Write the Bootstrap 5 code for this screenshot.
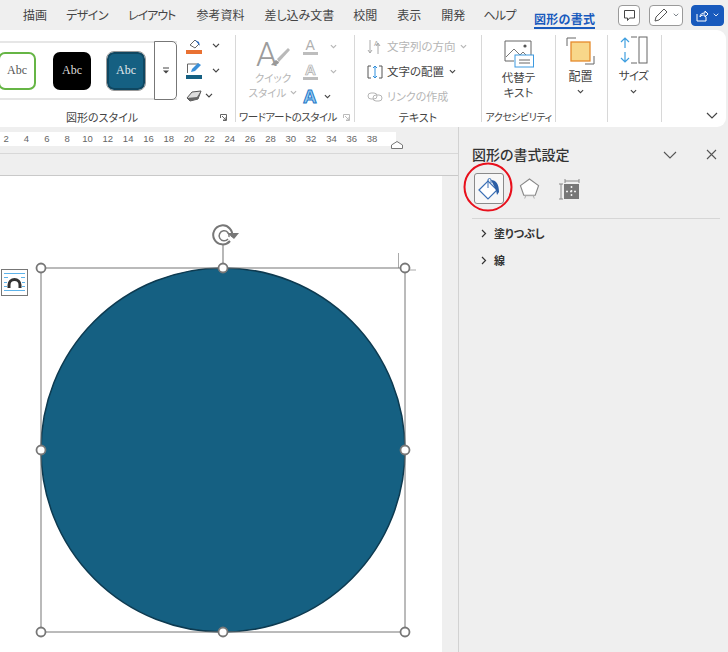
<!DOCTYPE html>
<html lang="ja">
<head>
<meta charset="utf-8">
<title>図形の書式設定</title>
<link href="https://cdn.jsdelivr.net/npm/bootstrap@5.3.0/dist/css/bootstrap.min.css" rel="stylesheet">
<style>
html,body{height:652px;overflow:hidden}
body{background:#efefef;color:#444;font-family:"Noto Sans CJK JP","Liberation Sans",sans-serif;font-size:12px;font-feature-settings:"palt";line-height:1.2}
svg{display:block;flex:none;overflow:visible}
.tabs{height:30px;padding-left:23px}
.tab{margin-right:20px;white-space:nowrap}
.tab-1{margin-right:19px}
.tab-8{margin-right:18px}
.tab-2{letter-spacing:-.5px}
.tab-3{letter-spacing:-1px;margin-right:21px}
.tab-5{margin-right:19px}
.tab-9{letter-spacing:-.6px;margin-right:18px}
.tab-active{color:#185abd;font-weight:700;border-bottom:2px solid #185abd;line-height:17px;margin-top:8px;height:19px;letter-spacing:.3px;margin-right:23px}
.qbtn{height:21px;border:1px solid #9a9a9a;border-radius:4px;background:#fff}
.qbtn-blue{background:#185abd;border-color:#185abd;color:#fff}
.ribbon{height:97px;width:726px;background:#fff;border-radius:0 9px 9px 0}
.grp{height:87px;margin-top:5px;border-right:1px solid #d8d8d8;flex:none;position:relative}
.g1{width:236px}.g2{width:119px}.g3{width:127px}.g4{width:74px}.g5{width:52px}.g6{width:54px}
.cap{font-size:11px;color:#444;height:14px;line-height:14px;white-space:nowrap;margin-top:auto;margin-bottom:-2px}
.cap-wa{font-size:10.5px;letter-spacing:-.5px;margin-left:3px}
.cap-ac{font-size:10px;letter-spacing:-.5px}
.gal{width:177px;height:59px;margin-top:6px;border-top:2px solid #e6e6e6;border-bottom:2px solid #e6e6e6;position:relative}
.tile{width:38px;height:38px;border-radius:7px;font:12px "Liberation Serif",serif;flex:none}
.t-w{background:#fff;border:2px solid #66b545;color:#555;margin-left:-2px}
.t-b{background:#000;color:#ddd;margin-left:17px}
.t-c{background:#156082;color:#e2e8ec;border:2px solid #0f4761;outline:1px solid #999;margin-left:16px}
.galbtn{width:23px;height:59px;margin-top:-2px;margin-bottom:-2px;margin-left:auto;border:1px solid #777;border-radius:0 5px 5px 0;background:#fff}
.gcol{margin-left:9px;margin-top:-2px}
.rowi{height:25px}
.dim{color:#b5b5b5}
.lab{font-size:11.5px;white-space:nowrap}
.quick{width:62px;margin-left:6px;margin-top:4px;font-size:10.5px;line-height:15px}
.main{height:525px}
.left{width:459px;border-right:1px solid #d2d2d2}
.rulerwrap{height:27px;padding-top:5px;border-bottom:1px solid #d8d8d8;position:relative}
.ruler{width:396px;height:14px;background:#fff;overflow:hidden}
.ruler span{flex:none;width:20.33px;text-align:center;font:9.5px/14px "Liberation Sans",sans-serif;color:#666}
.ruler span:first-child{margin-left:-4px}
.marker{position:absolute;left:391px;top:14px}
.band{height:22px;border-bottom:1px solid #c9c9c9}
.doc{width:442px;height:476px;background:#fff}
.pane{width:269px;padding:19px 8px 0 13px;position:relative}
.ptitle{font-size:14px;font-weight:500;color:#333;line-height:17px}
.picon{height:31px;margin-top:10px}
.pact{width:30px;height:31px;margin-left:2px;border:1px solid #8a8a8a;border-radius:3px;background:#f7f7f7}
.prule{border-top:1px solid #d6d6d6;margin-top:14px;position:relative}
.pitem{font-size:11px;font-weight:700;color:#333;height:27px;margin-left:9px}
.ring{position:absolute;left:4px;top:35px}
</style>
</head>
<body>
<svg class="d-none" width="0" height="0"><symbol id="chev" viewBox="0 0 8 5"><path d="M1 .8l3 3 3-3" fill="none" stroke="currentColor" stroke-width="1.2"/></symbol></svg>

<div class="tabs d-flex align-items-center">
  <div class="tab tab-1">描画</div><div class="tab tab-2">デザイン</div><div class="tab tab-3">レイアウト</div><div class="tab">参考資料</div><div class="tab tab-5">差し込み文書</div><div class="tab">校閲</div><div class="tab">表示</div><div class="tab tab-8">開発</div><div class="tab tab-9">ヘルプ</div><div class="tab tab-active">図形の書式</div>
  <div class="qbtn d-flex align-items-center justify-content-center" style="width:22px">
    <svg width="13" height="13" viewBox="0 0 13 13"><path d="M1.5 1.5h10v7.5h-5l-2 2.5v-2.5h-3z" fill="none" stroke="#444"/></svg>
  </div>
  <div class="qbtn d-flex align-items-center justify-content-center gap-1" style="width:34px;margin-left:9px">
    <svg width="16" height="16" viewBox="0 0 16 16"><path d="M2 14l1-4 8-8 3 3-8 8z" fill="none" stroke="#555"/></svg>
    <svg width="6" height="4" class="text-secondary"><use href="#chev"/></svg>
  </div>
  <div class="qbtn qbtn-blue d-flex align-items-center justify-content-center gap-1" style="width:33px;margin-left:8px">
    <svg width="13" height="13" viewBox="0 0 13 13"><path d="M1 5v7h9V8M4 8c0-3 2-4 5-4V2l3 3-3 3V6C7 6 5 6 4 8z" fill="none" stroke="#fff"/></svg>
    <svg width="6" height="4"><use href="#chev"/></svg>
  </div>
</div>

<div class="ribbon d-flex">
  <div class="grp g1 d-flex flex-column">
    <div class="d-flex">
      <div class="gal d-flex align-items-center">
        <div class="tile t-w d-flex align-items-center justify-content-center">Abc</div>
        <div class="tile t-b d-flex align-items-center justify-content-center">Abc</div>
        <div class="tile t-c d-flex align-items-center justify-content-center">Abc</div>
        <div class="galbtn d-flex align-items-center justify-content-center">
          <svg width="8" height="7" viewBox="0 0 8 7"><path d="M1 1h6" stroke="#444"/><path d="M1 3.500l3 3 3-3z" fill="#444"/></svg>
        </div>
      </div>
      <div class="gcol">
        <div class="rowi d-flex align-items-center">
          <svg width="17" height="17" viewBox="0 0 17 17"><path d="M4 8l5-5 4 4-4 4z" fill="none" stroke="#666"/><path d="M9 3l4 2 1 4z" fill="#2f6fc4"/><rect x="0" y="13" width="16" height="4" fill="#e97132"/></svg>
          <svg width="8" height="5" style="margin-left:9px"><use href="#chev"/></svg>
        </div>
        <div class="rowi d-flex align-items-center">
          <svg width="17" height="17" viewBox="0 0 17 17"><path d="M1.500 11V2h11" fill="none" stroke="#666"/><path d="M5 10l1-3 6-6 3 2-6 6z" fill="#3a8fd8"/><rect x="0" y="13" width="16" height="4" fill="#156082"/></svg>
          <svg width="8" height="5" style="margin-left:9px"><use href="#chev"/></svg>
        </div>
        <div class="rowi d-flex align-items-center">
          <svg width="17" height="14" viewBox="0 0 17 14"><path d="M1 9l5-6 9-1-3 8-8 2z" fill="#ddd" stroke="#555"/><path d="M1 9l10-1 4-6-3 8-8 2z" fill="#666"/></svg>
          <svg width="8" height="5" style="margin-left:2px"><use href="#chev"/></svg>
        </div>
      </div>
    </div>
    <div class="cap d-flex">
      <span style="margin-left:66px">図形のスタイル</span>
      <svg class="ms-auto me-2 mt-1" width="7" height="7" viewBox="0 0 7 7"><path d="M.5 4V.5H6.500V6.500H3M2 2l4 4M6 3v3H3" fill="none" stroke="#666"/></svg>
    </div>
  </div>

  <div class="grp g2 d-flex flex-column">
    <div class="d-flex">
      <div class="quick text-center dim">
        <svg class="mx-auto" width="36" height="31" viewBox="0 0 36 31"><text x="1" y="27" font-family="Roboto,'Liberation Sans',sans-serif" font-weight="300" font-size="34" fill="#9c9c9c">A</text><path d="M33 9L22 20l2 3 11-12z" fill="#b9b9b9"/><path d="M21 21c-2 1-3 3-5 5 4 1 8-1 8-3z" fill="#999"/></svg>
        <div>クイック</div>
        <div class="d-flex align-items-center justify-content-center">スタイル<svg width="7" height="5" class="ms-1"><use href="#chev"/></svg></div>
      </div>
      <div style="margin-left:-1px">
        <div class="rowi d-flex align-items-center dim" style="margin-top:-1px">
          <svg width="16" height="18" viewBox="0 0 16 18"><text x="2.500" y="12" font-family="Liberation Sans,sans-serif" font-size="14" fill="#b0b0b0">A</text><rect y="14" width="15" height="3" fill="#bdbdbd"/></svg>
          <svg width="7" height="5" style="margin-left:11px"><use href="#chev"/></svg>
        </div>
        <div class="rowi d-flex align-items-center dim">
          <svg width="16" height="18" viewBox="0 0 16 18"><text x="2" y="12" font-family="Liberation Sans,sans-serif" font-size="15" font-weight="700" fill="#eee" stroke="#aaa" stroke-width=".7">A</text><rect y="14" width="15" height="3" fill="#bdbdbd"/></svg>
          <svg width="7" height="5" style="margin-left:11px"><use href="#chev"/></svg>
        </div>
        <div class="rowi d-flex align-items-center">
          <svg width="16" height="17" viewBox="0 0 16 17"><text x="0" y="15" font-family="Liberation Sans,sans-serif" font-size="19" font-weight="700" fill="#9fd0f2" stroke="#1c78c9" stroke-width="1">A</text></svg>
          <svg width="7" height="5" style="margin-left:5px"><use href="#chev"/></svg>
        </div>
      </div>
    </div>
    <div class="cap cap-wa d-flex">
      <span>ワードアートのスタイル</span>
      <svg class="ms-auto mt-1" style="margin-right:4px" width="7" height="7" viewBox="0 0 7 7"><path d="M.5 4V.5H6.500V6.500H3M2 2l4 4M6 3v3H3" fill="none" stroke="#bbb"/></svg>
    </div>
  </div>

  <div class="grp g3 d-flex flex-column">
    <div style="padding-left:12px;margin-top:-1px">
      <div class="rowi d-flex align-items-center dim">
        <svg width="16" height="16" viewBox="0 0 16 16" class="me-1"><path d="M3 1v13M1 11l2 3 2-3M11 15V5M9 7l2-3 2 3" fill="none" stroke="#aaa"/><text x="7" y="7" font-size="7" font-family="Liberation Sans,sans-serif" fill="#aaa">A</text></svg>
        <span class="lab">文字列の方向</span><svg width="7" height="5" class="ms-1"><use href="#chev"/></svg>
      </div>
      <div class="rowi d-flex align-items-center">
        <svg width="16" height="16" viewBox="0 0 16 16" class="me-1"><path d="M4 2H1v12h3M12 2h3v12h-3" fill="none" stroke="#555"/><path d="M8 2v12M6 4l2-2 2 2M6 12l2 2 2-2" fill="none" stroke="#2f8fdc"/></svg>
        <span class="lab">文字の配置</span><svg width="7" height="5" style="margin-left:5px"><use href="#chev"/></svg>
      </div>
      <div class="rowi d-flex align-items-center dim">
        <svg width="16" height="12" viewBox="0 0 16 12" class="me-1"><rect x="1" y="2" width="9" height="6" rx="3" fill="none" stroke="#b5b5b5"/><rect x="6" y="4" width="9" height="6" rx="3" fill="none" stroke="#b5b5b5"/></svg>
        <span class="lab" style="font-size:11px">リンクの作成</span>
      </div>
    </div>
    <div class="cap text-center">テキスト</div>
  </div>

  <div class="grp g4 d-flex flex-column">
    <div class="text-center" style="margin-top:5px">
      <svg class="mx-auto" width="30" height="28" viewBox="0 0 30 28"><path d="M10 21H1V1h26v15" fill="none" stroke="#666"/><path d="M2 17l8-8 6 6 3-3 5 5" fill="none" stroke="#777"/><circle cx="21" cy="6" r="1.600" fill="#555"/><rect x="11" y="15" width="18.500" height="12" fill="#fff" stroke="#3d9ae0"/><path d="M15 20h11M15 23h11" stroke="#666"/></svg>
      <div style="line-height:15px;margin-top:2px;font-size:11.5px">代替テ<br>キスト</div>
    </div>
    <div class="cap cap-ac text-center">アクセシビリティ</div>
  </div>

  <div class="grp g5 d-flex flex-column align-items-center">
    <svg width="29" height="28" viewBox="0 0 29 28" style="margin-top:2px;margin-left:-2px"><path d="M1 9V1h9M28 19v8h-9" fill="none" stroke="#666"/><rect x="5" y="5" width="19" height="19" fill="#f8d78a" stroke="#e58a2c" stroke-width="1.300"/></svg>
    <div style="margin-top:3px;line-height:15px;margin-left:-2px">配置</div>
    <svg width="7" height="5" style="margin-left:-2px;margin-top:6px"><use href="#chev"/></svg>
  </div>

  <div class="grp g6 d-flex flex-column align-items-center">
    <svg width="28" height="28" viewBox="0 0 28 28" style="margin-top:1px;margin-left:-2px"><path d="M5 12V2M1 6l4-4 4 4M5 16v10M1 22l4 4 4-4" fill="none" stroke="#3f9fe0" stroke-width="1.200"/><path d="M11 1h6M11 27h6" stroke="#666"/><rect x="19" y="1" width="8" height="26" fill="none" stroke="#666"/></svg>
    <div style="margin-top:4px;line-height:15px;margin-left:-2px;letter-spacing:-.6px;font-size:11.5px">サイズ</div>
    <svg width="7" height="5" style="margin-left:-2px;margin-top:6px"><use href="#chev"/></svg>
  </div>

  <div class="flex-grow-1 d-flex align-items-end justify-content-end" style="padding:0 8px 8px 0">
    <svg width="12" height="7" viewBox="0 0 12 7"><path d="M1 1l5 5 5-5" fill="none" stroke="#444" stroke-width="1.200"/></svg>
  </div>
</div>

<div class="main d-flex">
  <div class="left">
    <div class="rulerwrap">
      <div class="ruler d-flex"><span>2</span><span>4</span><span>6</span><span>8</span><span>10</span><span>12</span><span>14</span><span>16</span><span>18</span><span>20</span><span>22</span><span>24</span><span>26</span><span>28</span><span>30</span><span>32</span><span>34</span><span>36</span><span>38</span></div>
      <svg class="marker" width="12" height="8" viewBox="0 0 12 8"><path d="M.5 7.500V4L6 .5 11.500 4v3.500z" fill="#fff" stroke="#777"/></svg>
    </div>
    <div class="band"></div>
    <div class="doc">
      <svg width="442" height="476" viewBox="0 176 442 476">
        <path d="M398.500 253v15M405 270h11" stroke="#aaa"/>
        <circle cx="223" cy="450" r="182" fill="#156082" stroke="#0d3a50" stroke-width="1.500"/>
        <rect x="41" y="268" width="364" height="364" fill="none" stroke="#777"/>
        <path d="M223 245v23" stroke="#888" stroke-width="1.200"/>
        <g transform="translate(1,-3)">
          <path d="M231 240a9.500 9.500 0 1 0-2 4" fill="none" stroke="#777" stroke-width="2"/>
          <path d="M228 240a5 5 0 1 0-1 2" fill="none" stroke="#777" stroke-width="1.500"/>
          <path d="M226 236h12l-5 6z" fill="#777"/>
        </g>
        <g fill="#fff" stroke="#777" stroke-width="1.800">
          <circle cx="41" cy="268" r="4.500"/><circle cx="223" cy="268" r="4.500"/><circle cx="405" cy="268" r="4.500"/>
          <circle cx="41" cy="450" r="4.500"/><circle cx="405" cy="450" r="4.500"/>
          <circle cx="41" cy="632" r="4.500"/><circle cx="223" cy="632" r="4.500"/><circle cx="405" cy="632" r="4.500"/>
        </g>
        <rect x="1.500" y="269.500" width="26" height="26" fill="#fff" stroke="#777"/>
        <path d="M4 273.500h21M4 277.500h4M21 277.500h4M4 282.500h3M22 282.500h3M4 286.500h3M22 286.500h3M4 290.500h21" stroke="#5db3ea"/>
        <path d="M9 288v-3a5.500 5.500 0 0 1 11 0v3" fill="none" stroke="#333" stroke-width="3"/>
      </svg>
    </div>
  </div>

  <div class="pane flex-grow-1">
    <div class="d-flex align-items-center">
      <div class="ptitle">図形の書式設定</div>
      <svg class="ms-auto" width="14" height="8" viewBox="0 0 14 8"><path d="M1 1l6 6 6-6" fill="none" stroke="#555" stroke-width="1.100"/></svg>
      <svg style="margin-left:29px;margin-right:3px" width="11" height="11" viewBox="0 0 11 11"><path d="M1 1l9 9M10 1l-9 9" stroke="#555" stroke-width="1.100"/></svg>
    </div>
    <div class="picon d-flex align-items-center">
      <div class="pact d-flex align-items-center justify-content-center">
        <svg width="24" height="24" viewBox="0 0 24 24"><path d="M2 13l9-9 9 9-9 9z" fill="#fff" stroke="#3a6fb5" stroke-width="1.200"/><path d="M11 11V3a1.500 1.500 0 0 1 3 0v3" fill="none" stroke="#3a6fb5"/><path d="M14 3c5 0 8 4 8 12l-2 3-1-5z" fill="#2b5ea5"/></svg>
      </div>
      <svg style="margin-left:15px" width="21" height="24" viewBox="0 0 22 24"><path d="M11 1.500l9.500 7-3.500 10H5L1.500 8.500z" fill="#fff" stroke="#888" stroke-width="1.200"/><path d="M6 22l1-3M16 22l-1-3M6 19h10" stroke="#aaa"/></svg>
      <svg style="margin-left:19px" width="20" height="20" viewBox="0 0 20 20"><path d="M6 0v4M20 0v4M6 2h14M0 5h4M0 20h4M2 5v15" fill="none" stroke="#888"/><rect x="5" y="5" width="15" height="15" fill="#777"/><path d="M12.500 7v11M7 12.500h11" stroke="#eee" stroke-width="1.500" stroke-dasharray="2 2"/></svg>
    </div>
    <div class="prule"></div>
    <div class="pitem d-flex align-items-center" style="margin-top:1px">
      <svg width="6" height="9" viewBox="0 0 6 9" style="margin-right:7px"><path d="M1 1l3.500 3.500L1 8" fill="none" stroke="#333" stroke-width="1.200"/></svg>塗りつぶし
    </div>
    <div class="pitem d-flex align-items-center">
      <svg width="6" height="9" viewBox="0 0 6 9" style="margin-right:7px"><path d="M1 1l3.500 3.500L1 8" fill="none" stroke="#333" stroke-width="1.200"/></svg>線
    </div>
    <svg class="ring" width="50" height="50" viewBox="0 0 50 50"><circle cx="25" cy="25" r="23.500" fill="none" stroke="#e8101c" stroke-width="2"/></svg>
  </div>
</div>
<script src="https://cdn.jsdelivr.net/npm/bootstrap@5.3.0/dist/js/bootstrap.bundle.min.js"></script>
</body>
</html>
